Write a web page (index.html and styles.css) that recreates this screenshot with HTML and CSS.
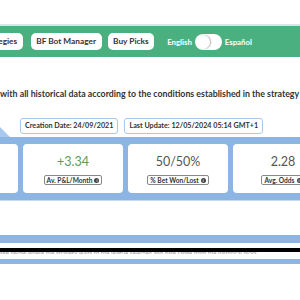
FILE: index.html
```html
<!DOCTYPE html>
<html>
<head>
<meta charset="utf-8">
<link rel="stylesheet" href="styles.css">
</head>
<body>
<div class="page">
  <div class="topbar"></div>
  <nav class="nav">
    <span class="btn first">Strategies</span>
    <span class="btn">BF Bot Manager</span>
    <span class="btn">Buy Picks</span>
    <div class="lang">
      <span class="lang-label">English</span>
      <span class="toggle"><span class="knob"></span></span>
      <span class="lang-label">Español</span>
    </div>
  </nav>
  <p class="intro">with all historical data according to the conditions established in the strategy</p>
  <div class="dates">
    <span class="tab"></span>
    <span class="date">Creation Date: 24/09/2021</span>
    <span class="date">Last Update: 12/05/2024 05:14 GMT+1</span>
  </div>
  <div class="stats">
    <div class="card"><div class="value">0</div><span class="label">Picks <i class="info">i</i></span></div>
    <div class="card"><div class="value green">+3.34</div><span class="label">Av. P&amp;L/Month <i class="info">i</i></span></div>
    <div class="card"><div class="value">50/50%</div><span class="label">% Bet Won/Lost <i class="info">i</i></span></div>
    <div class="card"><div class="value">2.28</div><span class="label">Avg. Odds <i class="info">i</i></span></div>
  </div>
  <div class="gap"></div>
  <div class="band"></div>
  <div class="blackbar"></div>
  <div class="ghost"><span>see below where the strategy leads to the league selected and date range from the historical picks</span></div>
  <div class="band thin"></div>
</div>
</body>
</html>
```

FILE: styles.css
```css
html, body {
  margin: 0;
  padding: 0;
  background: #fff;
}
.page {
  width: 300px;
  height: 300px;
  overflow: hidden;
  font-family: Lato, "Open Sans", sans-serif;
}
.topbar {
  height: 24px;
  border-bottom: 2px solid #dfe3e6;
  box-sizing: content-box;
}
.nav {
  height: 31px;
  background: #4bb07f;
  display: flex;
  align-items: center;
  gap: 6px;
  white-space: nowrap;
}
.btn {
  background: #fff;
  height: 17px;
  line-height: 17px;
  padding: 0 5.5px;
  border-radius: 5px;
  font-size: 8.3px;
  font-weight: 700;
  color: #333;
}
.btn.first {
  margin-left: -25px;
  margin-right: 2px;
}
.lang {
  display: flex;
  align-items: center;
  gap: 3px;
  margin-left: 7px;
}
.lang-label {
  color: #fff;
  font-size: 7.8px;
  font-weight: 700;
}
.toggle {
  width: 27px;
  height: 16px;
  background: #fff;
  border-radius: 8px;
  display: flex;
  align-items: center;
  padding-left: 1px;
  box-sizing: border-box;
}
.knob {
  width: 14px;
  height: 14px;
  border-radius: 50%;
  background: #fff;
  box-shadow: 1px 0 1.5px rgba(0,0,0,0.3);
}
.intro {
  margin: 30px 0 0 0;
  height: 13px;
  line-height: 13px;
  font-size: 8.8px;
  font-weight: 700;
  color: #333;
  white-space: nowrap;
}
.dates {
  display: flex;
  align-items: flex-end;
  gap: 6px;
  margin-top: 18px;
  height: 19px;
}
.tab {
  width: 10px;
  height: 10px;
  background: #a9c8ee;
  clip-path: polygon(0 0, 100% 100%, 0 100%);
  margin-right: 4px;
}
.date {
  align-self: flex-start;
  border: 1px solid #a9c8ee;
  border-radius: 3px;
  height: 14px;
  line-height: 14px;
  padding: 0 4px;
  font-size: 7.2px;
  font-weight: 700;
  color: #333;
  white-space: nowrap;
}
.stats {
  background: #8cb5e3;
  height: 64px;
  padding: 7px 0;
  box-sizing: border-box;
  display: flex;
  gap: 5px;
  margin-left: -82px;
  border-bottom: 1px solid #c9dbf0;
}
.card {
  flex: 0 0 100px;
  background: #fff;
  border-radius: 4px;
  display: flex;
  flex-direction: column;
  align-items: center;
  padding-top: 10px;
  box-sizing: border-box;
}
.value {
  font-size: 12.5px;
  line-height: 16px;
  color: #555;
}
.value.green {
  color: #5c9a5c;
}
.label {
  margin-top: 5px;
  border: 1px solid #888;
  border-radius: 2px;
  padding: 0 2px;
  height: 10px;
  box-sizing: border-box;
  font-size: 6.6px;
  line-height: 8px;
  font-weight: 700;
  color: #333;
  white-space: nowrap;
  display: flex;
  align-items: center;
  gap: 2px;
}
.info {
  display: inline-block;
  width: 5px;
  height: 5px;
  border-radius: 50%;
  background: #444;
  color: #fff;
  font-style: normal;
  font-size: 4px;
  line-height: 5px;
  text-align: center;
}
.gap {
  height: 34px;
}
.band {
  height: 8px;
  background: #8cb5e3;
}
.blackbar {
  margin-top: 5px;
  height: 4px;
  background: #000;
}
.ghost {
  height: 2px;
  overflow: hidden;
  white-space: nowrap;
  margin-bottom: 5px;
}
.ghost span {
  display: block;
  margin-top: -2px;
  font-size: 6px;
  line-height: 6px;
  color: #999;
}
.band.thin {
  height: 5px;
}
```
